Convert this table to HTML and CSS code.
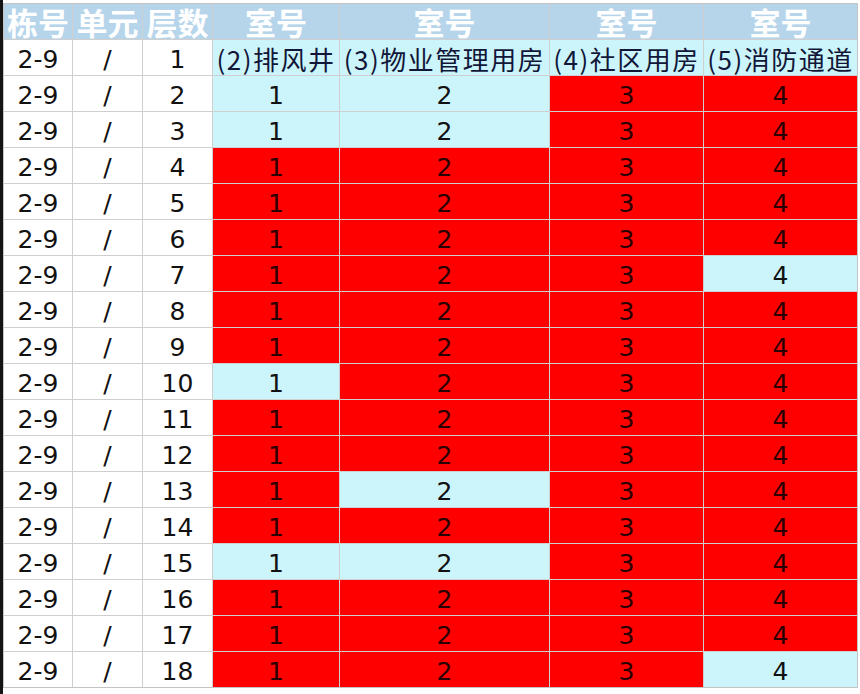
FILE: index.html
```html
<!DOCTYPE html>
<html lang="zh-CN">
<head>
<meta charset="utf-8">
<title>室号表</title>
<link rel="stylesheet" href="styles.css">
</head>
<body>
<div class="frame">
  <div class="sheet">
    <div class="c hd">栋号</div><div class="c hd">单元</div><div class="c hd">层数</div><div class="c hd">室号</div><div class="c hd">室号</div><div class="c hd">室号</div><div class="c hd">室号</div>

    <div class="c w">2-9</div><div class="c w">/</div><div class="c w">1</div><div class="c cy lb">(2)排风井</div><div class="c cy lb">(3)物业管理用房</div><div class="c cy lb">(4)社区用房</div><div class="c cy lb">(5)消防通道</div>

    <div class="c w">2-9</div><div class="c w">/</div><div class="c w">2</div><div class="c cy">1</div><div class="c cy">2</div><div class="c rd">3</div><div class="c rd">4</div>
    <div class="c w">2-9</div><div class="c w">/</div><div class="c w">3</div><div class="c cy">1</div><div class="c cy">2</div><div class="c rd">3</div><div class="c rd">4</div>
    <div class="c w">2-9</div><div class="c w">/</div><div class="c w">4</div><div class="c rd">1</div><div class="c rd">2</div><div class="c rd">3</div><div class="c rd">4</div>
    <div class="c w">2-9</div><div class="c w">/</div><div class="c w">5</div><div class="c rd">1</div><div class="c rd">2</div><div class="c rd">3</div><div class="c rd">4</div>
    <div class="c w">2-9</div><div class="c w">/</div><div class="c w">6</div><div class="c rd">1</div><div class="c rd">2</div><div class="c rd">3</div><div class="c rd">4</div>
    <div class="c w">2-9</div><div class="c w">/</div><div class="c w">7</div><div class="c rd">1</div><div class="c rd">2</div><div class="c rd">3</div><div class="c cy">4</div>
    <div class="c w">2-9</div><div class="c w">/</div><div class="c w">8</div><div class="c rd">1</div><div class="c rd">2</div><div class="c rd">3</div><div class="c rd">4</div>
    <div class="c w">2-9</div><div class="c w">/</div><div class="c w">9</div><div class="c rd">1</div><div class="c rd">2</div><div class="c rd">3</div><div class="c rd">4</div>
    <div class="c w">2-9</div><div class="c w">/</div><div class="c w">10</div><div class="c cy">1</div><div class="c rd">2</div><div class="c rd">3</div><div class="c rd">4</div>
    <div class="c w">2-9</div><div class="c w">/</div><div class="c w">11</div><div class="c rd">1</div><div class="c rd">2</div><div class="c rd">3</div><div class="c rd">4</div>
    <div class="c w">2-9</div><div class="c w">/</div><div class="c w">12</div><div class="c rd">1</div><div class="c rd">2</div><div class="c rd">3</div><div class="c rd">4</div>
    <div class="c w">2-9</div><div class="c w">/</div><div class="c w">13</div><div class="c rd">1</div><div class="c cy">2</div><div class="c rd">3</div><div class="c rd">4</div>
    <div class="c w">2-9</div><div class="c w">/</div><div class="c w">14</div><div class="c rd">1</div><div class="c rd">2</div><div class="c rd">3</div><div class="c rd">4</div>
    <div class="c w">2-9</div><div class="c w">/</div><div class="c w">15</div><div class="c cy">1</div><div class="c cy">2</div><div class="c rd">3</div><div class="c rd">4</div>
    <div class="c w">2-9</div><div class="c w">/</div><div class="c w">16</div><div class="c rd">1</div><div class="c rd">2</div><div class="c rd">3</div><div class="c rd">4</div>
    <div class="c w">2-9</div><div class="c w">/</div><div class="c w">17</div><div class="c rd">1</div><div class="c rd">2</div><div class="c rd">3</div><div class="c rd">4</div>
    <div class="c w">2-9</div><div class="c w">/</div><div class="c w">18</div><div class="c rd">1</div><div class="c rd">2</div><div class="c rd">3</div><div class="c cy">4</div>
  </div>
</div>
</body>
</html>
```
FILE: styles.css
```css
html, body {
  margin: 0;
  padding: 0;
  background: #ffffff;
}

.frame {
  width: 857px;
  height: 694px;
  box-sizing: border-box;
  border-left: 3px solid #141414;
  padding-top: 3px;
  background: #ffffff;
}

.sheet {
  display: grid;
  grid-template-columns: 68px 69px 69px 126px 209px 153px 153px;
  grid-auto-rows: 35px;
  gap: 1px;
  width: max-content;
  background: #cfcfcf;
  border: 1px solid #c4c4c4;
}

.c {
  display: flex;
  align-items: center;
  justify-content: center;
  box-sizing: border-box;
  padding-top: 4px;
  font-family: "DejaVu Sans", "Noto Sans CJK SC", sans-serif;
  font-size: 25px;
  line-height: 1;
  color: #111111;
  white-space: nowrap;
}

.hd {
  padding-top: 0;
  background: #b6d5eb;
  color: #ffffff;
  font-family: "Noto Sans CJK SC", sans-serif;
  font-weight: 700;
  font-size: 31px;
}

.w {
  background: #ffffff;
}

.cy {
  background: #cbf5fa;
}

.rd {
  background: #fe0000;
  color: #2a0000;
}

.lb {
  padding-top: 2px;
  font-family: "Noto Sans CJK SC", sans-serif;
  font-size: 26px;
  letter-spacing: 1.5px;
  color: #121638;
}
```
